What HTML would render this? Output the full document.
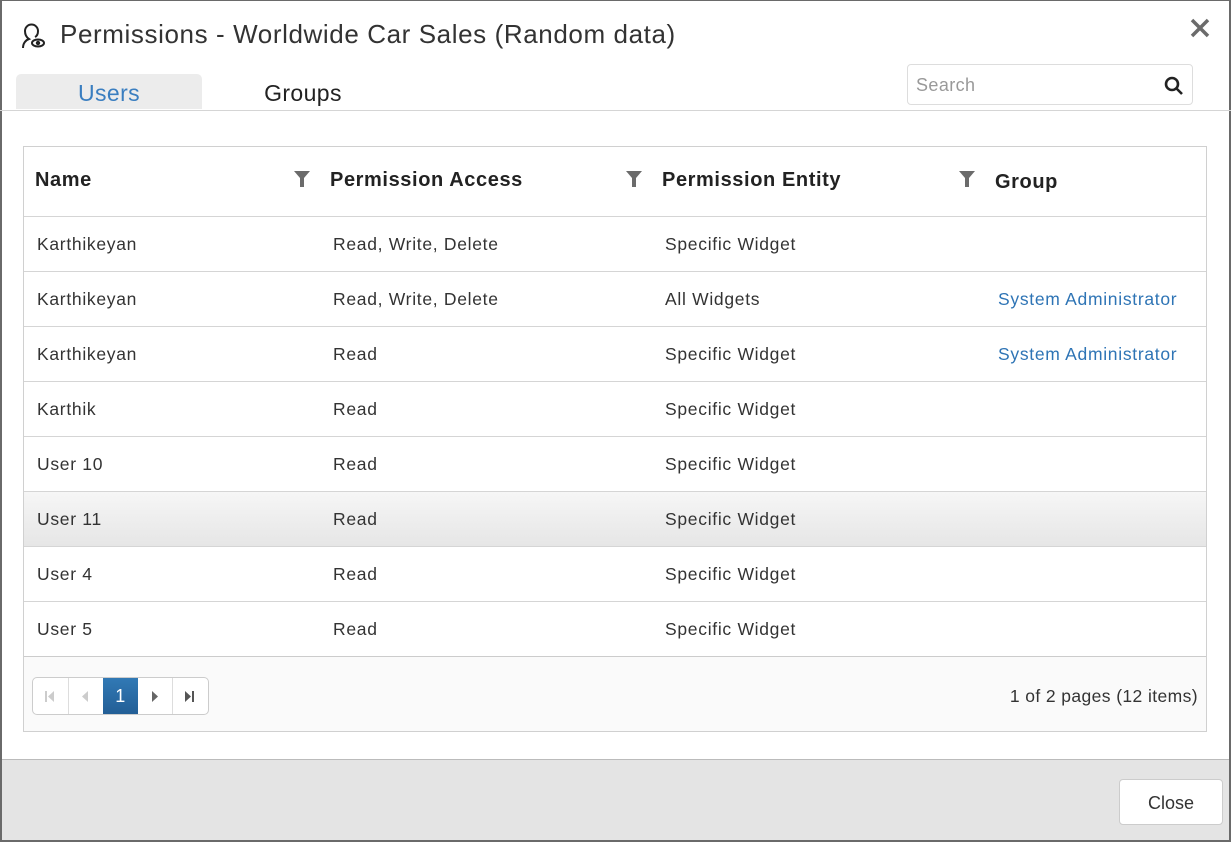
<!DOCTYPE html>
<html><head><style>
*{box-sizing:border-box;margin:0;padding:0}
body{width:1231px;height:842px;font-family:"Liberation Sans",Roboto,sans-serif;background:#fff;position:relative;overflow:hidden;color:#333}
.frame{position:absolute;left:0;top:0;width:1231px;height:842px;border:2px solid #6a6a6a;border-top-width:1px}
.abs{position:absolute}
.title{left:60px;top:19px;font-size:26px;color:#333;letter-spacing:0.6px}
.tab{top:74px;height:35px;font-size:23px;text-align:center;line-height:38px;letter-spacing:0.4px}
.grid{left:23px;top:146px;width:1184px;height:586px;border:1px solid #d0d0d0}
.row{position:absolute;left:0;width:1182px;height:55px;border-top:1px solid #d5d5d5;font-size:17.5px;line-height:55px;letter-spacing:0.7px}
.row span{position:absolute}
.hd{font-weight:bold;font-size:20px;color:#222;position:absolute;top:22px;letter-spacing:0.6px}
.blue{color:#2e74b5}
</style></head><body>
<div class="frame"></div>
<svg class="abs" style="left:19px;top:21px" width="30" height="30" viewBox="0 0 30 30" fill="none" stroke="#222" stroke-width="2"><path d="M4 27c0-5 3-8 6-9-3-2-4-5-4-8a6.5 6.5 0 0 1 13 0c0 3-1 5-3 6"/><ellipse cx="19" cy="22" rx="6" ry="3.5"/><circle cx="19" cy="22" r="1.2" fill="#222"/></svg>
<div class="abs title">Permissions - Worldwide Car Sales (Random data)</div>
<svg class="abs" style="left:1190px;top:18px" width="20" height="20" viewBox="0 0 20 20" stroke="#6b6b6b" stroke-width="3.5"><path d="M2 2L18 18M18 2L2 18"/></svg>
<div class="abs tab" style="left:16px;width:186px;background:#ececec;border-radius:5px 5px 0 0;color:#3a7ec0">Users</div>
<div class="abs tab" style="left:210px;width:186px;color:#222">Groups</div>
<div class="abs" style="left:0;top:110px;width:1231px;height:1px;background:#d5d5d5"></div>
<div class="abs" style="left:907px;top:64px;width:286px;height:41px;border:1px solid #ddd;border-radius:4px;font-size:18px;color:#999;padding:10px 8px;letter-spacing:0.4px">Search</div>
<svg class="abs" style="left:1163px;top:75px" width="22" height="22" viewBox="0 0 22 22" fill="none" stroke="#222" stroke-width="2.6"><circle cx="9" cy="9" r="6"/><path d="M13.5 13.5L19 19"/></svg>
<div class="abs grid">
 <div class="hd" style="left:11px">Name</div>
 <div class="hd" style="left:306px">Permission Access</div>
 <div class="hd" style="left:638px">Permission Entity</div>
 <div class="hd" style="left:971px;top:24px">Group</div>
 <svg class="abs" style="left:270px;top:24px" width="16" height="16"><path d="M0 0H16L10 7V16H6V7Z" fill="#6b6b6b"/></svg>
 <svg class="abs" style="left:602px;top:24px" width="16" height="16"><path d="M0 0H16L10 7V16H6V7Z" fill="#6b6b6b"/></svg>
 <svg class="abs" style="left:935px;top:24px" width="16" height="16"><path d="M0 0H16L10 7V16H6V7Z" fill="#6b6b6b"/></svg>
 <div class="row" style="top:69px"><span style="left:13px">Karthikeyan</span><span style="left:309px">Read, Write, Delete</span><span style="left:641px">Specific Widget</span></div>
 <div class="row" style="top:124px"><span style="left:13px">Karthikeyan</span><span style="left:309px">Read, Write, Delete</span><span style="left:641px">All Widgets</span><span class="blue" style="left:974px">System Administrator</span></div>
 <div class="row" style="top:179px"><span style="left:13px">Karthikeyan</span><span style="left:309px">Read</span><span style="left:641px">Specific Widget</span><span class="blue" style="left:974px">System Administrator</span></div>
 <div class="row" style="top:234px"><span style="left:13px">Karthik</span><span style="left:309px">Read</span><span style="left:641px">Specific Widget</span></div>
 <div class="row" style="top:289px"><span style="left:13px">User 10</span><span style="left:309px">Read</span><span style="left:641px">Specific Widget</span></div>
 <div class="row" style="top:344px;background:linear-gradient(#f6f6f6,#e6e6e6)"><span style="left:13px">User 11</span><span style="left:309px">Read</span><span style="left:641px">Specific Widget</span></div>
 <div class="row" style="top:399px"><span style="left:13px">User 4</span><span style="left:309px">Read</span><span style="left:641px">Specific Widget</span></div>
 <div class="row" style="top:454px"><span style="left:13px">User 5</span><span style="left:309px">Read</span><span style="left:641px">Specific Widget</span></div>
 <div class="row" style="top:509px;height:75px;background:#fafafa;border-top:1px solid #ccc;letter-spacing:0.4px">
  <div class="abs" style="left:8px;top:20px;width:177px;height:38px;border:1px solid #ccc;border-radius:5px;background:#fff;overflow:hidden">
   <div class="abs" style="left:35px;top:0;width:1px;height:38px;background:#ddd"></div>
   <div class="abs" style="left:104px;top:0;width:1px;height:38px;background:#ddd"></div>
   <div class="abs" style="left:139px;top:0;width:1px;height:38px;background:#ddd"></div>
   <div class="abs" style="left:70px;top:0;width:35px;height:38px;background:linear-gradient(#3179b5,#225d94);color:#fff;text-align:center;line-height:36px;font-size:18px">1</div>
   <svg class="abs" style="left:12px;top:13px" width="10" height="11"><path d="M0 0h2v11H0zM9 0v11L3 5.5z" fill="#ccc"/></svg>
   <svg class="abs" style="left:49px;top:13px" width="8" height="11"><path d="M6 0v11L0 5.5z" fill="#ccc"/></svg>
   <svg class="abs" style="left:119px;top:13px" width="8" height="11"><path d="M0 0v11L6 5.5z" fill="#666"/></svg>
   <svg class="abs" style="left:152px;top:13px" width="10" height="11"><path d="M0 0v11L6 5.5zM7 0h2v11H7z" fill="#555"/></svg>
  </div>
  <span style="right:8px;top:0;line-height:78px">1 of 2 pages (12 items)</span>
 </div>
</div>
<div class="abs" style="left:2px;top:759px;width:1227px;height:81px;background:#e4e4e4;border-top:1px solid #bbb"></div>
<div class="abs" style="left:1119px;top:779px;width:104px;height:46px;background:#fff;border:1px solid #ccc;border-radius:4px;text-align:center;line-height:46px;font-size:18px;color:#333">Close</div>
</body></html>
